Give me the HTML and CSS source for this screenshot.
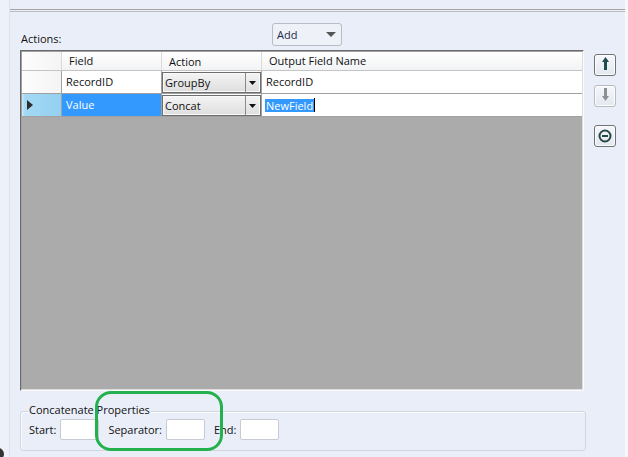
FILE: index.html
```html
<!DOCTYPE html>
<html>
<head>
<meta charset="utf-8">
<link rel="stylesheet" href="styles.css">
</head>
<body>
<div class="window">
  <div class="lstrip"></div>
  <div class="main">
    <div class="rule"></div>
    <div class="toolbar">
      <div class="actions-label">Actions:</div>
      <div class="add-dd"><span>Add</span><span class="dd-arrow"></span></div>
    </div>
    <div class="grid-area">
      <div class="grid">
        <div class="grid-inner">
          <div class="row head">
            <div class="c rh"></div>
            <div class="c f">Field</div>
            <div class="c a">Action</div>
            <div class="c o">Output Field Name</div>
          </div>
          <div class="row">
            <div class="c rh"></div>
            <div class="c f">RecordID</div>
            <div class="c a">
              <div class="combo"><span class="combo-text">GroupBy</span><span class="combo-btn"><svg width="8" height="4" viewBox="0 0 8 4"><polygon points="0,0 7,0 3.5,4" fill="#111"/></svg></span></div>
            </div>
            <div class="c o">RecordID</div>
          </div>
          <div class="row current">
            <div class="c rh"><span class="marker"></span></div>
            <div class="c f selcell">Value</div>
            <div class="c a">
              <div class="combo"><span class="combo-text">Concat</span><span class="combo-btn"><svg width="8" height="4" viewBox="0 0 8 4"><polygon points="0,0 7,0 3.5,4" fill="#111"/></svg></span></div>
            </div>
            <div class="c o edit"><span class="seltext">NewField</span><span class="caret"></span></div>
          </div>
          <div class="empty"></div>
        </div>
      </div>
      <div class="side">
        <div class="btn">
          <svg width="20" height="20" viewBox="0 0 20 20"><polygon points="10.5,2 14,7 7,7" fill="#1f4b4b"/><rect x="9" y="7" width="3" height="8" fill="#1f4b4b"/></svg>
        </div>
        <div class="btn disabled down">
          <svg width="20" height="20" viewBox="0 0 20 20"><rect x="9" y="2" width="3" height="8" fill="#8d8f92"/><polygon points="7,10 14,10 10.5,15" fill="#8d8f92"/></svg>
        </div>
        <div class="btn remove">
          <svg width="20" height="20" viewBox="0 0 20 20"><circle cx="10" cy="10" r="5.5" fill="none" stroke="#264848" stroke-width="2"/><rect x="7" y="9" width="6" height="2" fill="#264848"/></svg>
        </div>
      </div>
    </div>
    <div class="props">
      <div class="props-title">Concatenate Properties</div>
      <div class="fields">
        <span class="flabel">Start:</span><span class="finput"></span>
        <span class="flabel">Separator:</span><span class="finput"></span>
        <span class="flabel">End:</span><span class="finput"></span>
      </div>
    </div>
  </div>
  <div class="rstrip"></div>
</div>
<div class="annotation"></div>
<div class="corner-icon"></div>
</body>
</html>
```
FILE: styles.css
```css
* { box-sizing: border-box; }
html, body { margin: 0; padding: 0; }
body {
  width: 628px;
  height: 457px;
  overflow: hidden;
  position: relative;
  background: #eaeef8;
  font-family: "Open Sans", "Noto Sans", sans-serif;
  font-size: 11px;
  color: #111;
}
.window { display: flex; height: 457px; }
.lstrip { width: 10px; background: #eef1f9; border-right: 1px solid #dde2eb; }
.main { width: 615px; }
.rstrip { width: 3px; background: #f6f8fc; }

.rule {
  margin-top: 9px;
  height: 3px;
  border-top: 1px solid #a3a3a3;
  border-bottom: 1px solid #bcbcbc;
}
.toolbar {
  display: flex;
  align-items: flex-end;
  height: 38px;
  padding: 0 0 4px 10px;
}
.actions-label {
  flex: 0 0 252px;
  padding-left: 1px;
  line-height: 15px;
}
.add-dd {
  width: 70px;
  height: 23px;
  border: 1px solid #b7bcc5;
  border-radius: 3px;
  background: #eef1f8;
  display: flex;
  align-items: center;
  justify-content: space-between;
  padding: 0 5px 0 4px;
  color: #1d2a48;
}
.dd-arrow {
  width: 0; height: 0;
  border-left: 5px solid transparent;
  border-right: 5px solid transparent;
  border-top: 5px solid #555;
}

.grid-area { display: flex; padding-left: 10px; }
.grid {
  width: 564px;
  height: 341px;
  border: 1px solid;
  border-color: #6b6b6b #fbfbfb #fbfbfb #6b6b6b;
}
.grid-inner {
  height: 100%;
  border: 1px solid;
  border-color: #a0a0a0 #dedede #dedede #a0a0a0;
  background: #ababab;
  display: flex;
  flex-direction: column;
}
.row {
  display: flex;
  height: 23px;
  border-bottom: 1px solid #a0a0a0;
  background: #fff;
  line-height: 22px;
}
.row.head {
  height: 19px;
  line-height: 18px;
  border-bottom: 1px solid #c4c4c4;
  background: linear-gradient(#ffffff, #f2f3f4);
}
.c { border-right: 1px solid #a0a0a0; padding-left: 4px; white-space: nowrap; }
.head .c { border-right: 1px solid #dadada; padding-left: 7px; }
.rh { width: 40px; padding: 0; background: linear-gradient(to right, #fdfdfd, #f4f4f4); position: relative; }
.head .rh { padding: 0; }
.f { width: 100px; }
.a { width: 100px; padding: 1px 0 0 0; }
.o { flex: 1; border-right: none; }
.head .o { border-right: none; }

.current .rh {
  background: linear-gradient(to right, #cbe9f9 0, #a4d9f4 3px, #93d0f1 100%);
  display: flex;
  align-items: center;
  padding-left: 5px;
}
.marker {
  width: 0; height: 0;
  border-top: 5px solid transparent;
  border-bottom: 5px solid transparent;
  border-left: 6px solid #2d2d2d;
}
.selcell { background: #3399ff; color: #fff; }

.combo {
  width: 99px;
  height: 21px;
  border: 1px solid #6e6e6e;
  background: linear-gradient(#f4f4f4, #dedede);
  box-shadow: inset 0 0 0 1px #f9f9f9;
  display: flex;
  line-height: 19px;
}
.combo-text { flex: 1; padding-left: 2px; color: #111; }
.combo-btn {
  width: 15px;
  border-left: 1px solid #8a8a8a;
  display: flex;
  align-items: center;
  justify-content: center;
  padding-top: 1px;
}

.edit { padding-left: 3px; display: flex; align-items: center; }
.seltext {
  display: inline-block;
  line-height: 13px;
  padding: 0 1px;
  background: #3399ff;
  color: #fff;
}
.caret { width: 1px; height: 14px; background: #000; }

.empty { flex: 1; background: #ababab; }

.side {
  margin-left: 10px;
  padding-top: 4px;
  display: flex;
  flex-direction: column;
}
.btn {
  width: 22px;
  height: 22px;
  border: 1px solid #6f7378;
  border-radius: 3px;
  background: linear-gradient(#f5f7fb, #e3e7ef);
  box-shadow: inset 0 0 0 1px #fdfdfe;
  display: flex;
  align-items: center;
  justify-content: center;
}
.btn.disabled { border-color: #b6bac1; }
.btn.down { margin-top: 9px; }
.btn.remove { margin-top: 18px; }

.props {
  margin: 20px 0 0 10px;
  width: 566px;
  height: 40px;
  border: 1px solid #d2d7df;
  border-radius: 3px;
  box-shadow: inset 1px 1px 0 #fafbfe;
}
.props-title {
  width: fit-content;
  margin: -10px 0 0 7px;
  padding: 0 1px;
  line-height: 15px;
  background: #eaeef8;
}
.fields {
  display: flex;
  align-items: center;
  margin-top: 2px;
  padding-left: 8px;
}
.flabel { margin-right: 4px; line-height: 15px; }
.finput {
  width: 39px;
  height: 21px;
  margin-right: 9px;
  background: #fff;
  border: 1px solid #c6cbd4;
  border-radius: 2px;
}

.annotation {
  position: absolute;
  left: 95px;
  top: 391px;
  width: 128px;
  height: 60px;
  border: 3px solid #22b14c;
  border-radius: 16px;
}
.corner-icon {
  position: absolute;
  left: -8px;
  top: 448px;
  width: 12px;
  height: 12px;
  border-radius: 50%;
  background: #333;
}
```
